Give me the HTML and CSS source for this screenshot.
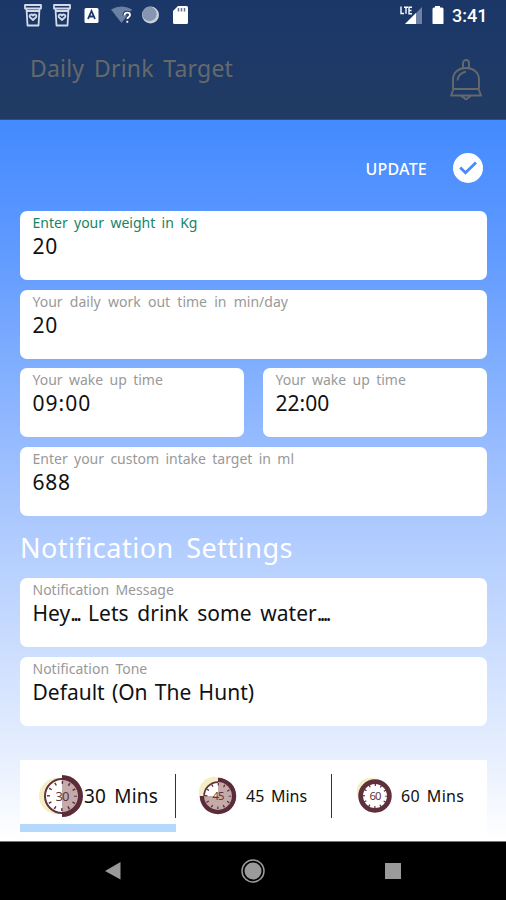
FILE: index.html
```html
<!DOCTYPE html>
<html lang="en">
<head>
    <meta charset="UTF-8">
    <meta name="viewport" content="width=device-width, initial-scale=1.0">
    <title>Daily Drink Target</title>
    <link rel="stylesheet" href="styles.css">
</head>
<body>
    <header>
        <div class="status-bar">
            <svg width="180" height="28" viewBox="0 0 180 28">
                <g fill="none" stroke="#d3dbe8" stroke-width="1.800" stroke-linejoin="round">
                    <path d="M5 5h16v3.500H5zM6.500 9l1 16.500h11l1-16.500M7 11h12"/>
                    <path d="M13 20l-3.200-3c-1-2.200 1.700-3.400 3.200-1.400 1.500-2 4.200-.8 3.200 1.400z"/>
                    <path d="M34 5h16v3.500H34zM35.500 9l1 16.500h11l1-16.500M36 11h12"/>
                    <path d="M42 20l-3.200-3c-1-2.200 1.700-3.400 3.200-1.400 1.500-2 4.200-.8 3.200 1.400z"/>
                </g>
                <rect x="64.500" y="8" width="14" height="15" rx="1.500" fill="#fff"/>
                <path d="M68 19l3.500-8 3.500 8M69.500 16.500h4" fill="none" stroke="#1d3866" stroke-width="1.800"/>
                <path d="M91 9.500q10.500-6 21 0L101.500 23z" fill="#6b80a3"/>
                <path d="M104.500 15.500c0-4 5.500-3.500 5.500-.5 0 2-2.700 2-2.700 4.500M107.300 21v2" fill="none" stroke="#1d3866" stroke-width="4"/>
                <path d="M104.500 15.500c0-4 5.500-3.500 5.500-.5 0 2-2.700 2-2.700 4M107.300 20.800v2" fill="none" stroke="#fff" stroke-width="1.800"/>
                <circle cx="130.500" cy="15" r="8.500" fill="#c9d0dc"/>
                <circle cx="129.500" cy="14" r="7.200" fill="#8796b0"/>
                <path d="M158 6h8.500q1.500 0 1.500 1.500v15q0 1.500-1.500 1.500h-12q-1.500 0-1.500-1.500V11z" fill="#fff"/>
                <path d="M158.500 8v3.500M161.500 8v3.500M164.500 8v3.500" stroke="#62738f" stroke-width="1.500"/>
            </svg>
            <div class="status-right">
                <svg width="46" height="24" viewBox="0 0 46 24">
                    <path d="M23 7v17H6z" fill="#6f82a3"/>
                    <path d="M17 13v11H6z" fill="#fff"/>
                    <path d="M2 6.500v7h3M5 7.200h4M7 7.200v6.500M13 7.200h-3v6.500h3M10 10.500h2.500" fill="none" stroke="#fff" stroke-width="1.400"/>
                    <path d="M36 6h5v1.500h2q1.500 0 1.500 1.500v14q0 1.500-1.500 1.500h-8q-1.500 0-1.500-1.500V9q0-1.500 1.500-1.500h1z" fill="#fff"/>
                </svg>
                <span class="clock">3:41</span>
            </div>
        </div>
        <div class="title-bar">
            <h1>Daily Drink Target</h1>
            <svg width="34" height="44" viewBox="0 0 34 44" fill="none" stroke="#66696c" stroke-width="1.900">
                <path d="M14 10V5a3 3 0 0 1 6 0v5"/>
                <path d="M4 31V21.500C4 14 10 10 17 10s13 4 13 11.500V31"/>
                <path d="M4.500 31h25l2.500 6.500H2z" stroke-linejoin="round"/>
                <path d="M12.500 38q1 1.500 2.500 1.500 2 3.500 4 0 1.500 0 2.500-1.500M8.500 22.500q.5-7 8.500-9"/>
            </svg>
        </div>
    </header>

    <main>
        <div class="update">
            <span>UPDATE</span>
            <svg width="30" height="30" viewBox="0 0 30 30">
                <circle cx="15" cy="15" r="15" fill="#fff"/>
                <path d="M7.200 14.500l5.300 5.300L23 9.500" fill="none" stroke="#4a8bfa" stroke-width="2.800"/>
            </svg>
        </div>

        <div class="fields">
            <div class="field active">
                <label>Enter your weight in Kg</label>
                <div class="value number">20</div>
            </div>
            <div class="field">
                <label class="workout">Your daily work out time in min/day</label>
                <div class="value number">20</div>
            </div>
            <div class="row">
                <div class="field">
                    <label>Your wake up time</label>
                    <div class="value time">09:00</div>
                </div>
                <div class="field">
                    <label>Your wake up time</label>
                    <div class="value">22:00</div>
                </div>
            </div>
            <div class="field">
                <label>Enter your custom intake target in ml</label>
                <div class="value number">688</div>
            </div>
        </div>

        <h2>Notification Settings</h2>

        <div class="fields">
            <div class="field">
                <label>Notification Message</label>
                <div class="value message">Hey<span class="dots">...</span> Lets drink some water<span class="dots">....</span></div>
            </div>
            <div class="field">
                <label>Notification Tone</label>
                <div class="value tone">Default (On The Hunt)</div>
            </div>
        </div>

        <div class="tabs">
            <div class="tab selected">
                <svg width="46" height="46" viewBox="0 0 46 46">
                    <circle cx="19" cy="23" r="18" fill="#f5edc4"/>
                    <circle cx="24" cy="23" r="17" fill="#fff" stroke="#5f3440" stroke-width="2"/>
                    <path d="M24 2a21 21 0 0 1 0 42z" fill="#5a2b38"/>
                    <path d="M24 7a16 16 0 0 1 0 32z" fill="#c4aaa9"/>
                    <circle cx="24" cy="23" r="13.500" fill="none" stroke="#5f3440" stroke-width="3" stroke-dasharray="1.500 5.569" stroke-dashoffset=".75"/>
                    <text x="24" y="28" class="dial">30</text>
                </svg>
                <span class="big">30 Mins</span>
            </div>
            <div class="tab second">
                <svg width="40" height="40" viewBox="0 0 46 46">
                    <circle cx="19" cy="19" r="18" fill="#f5edc4"/>
                    <circle cx="23" cy="23" r="16" fill="#fff" stroke="#5f3440" stroke-width="2"/>
                    <path d="M23 2a21 21 0 1 1-21 21h21z" fill="#5a2b38"/>
                    <path d="M23 7a16 16 0 1 1-16 16h16z" fill="#c4aaa9"/>
                    <circle cx="23" cy="23" r="13.500" fill="none" stroke="#5f3440" stroke-width="3" stroke-dasharray="1.500 5.569" stroke-dashoffset=".75"/>
                    <text x="23" y="28" class="dial">45</text>
                </svg>
                <span>45 Mins</span>
            </div>
            <div class="tab third">
                <svg width="40" height="40" viewBox="0 0 46 46">
                    <circle cx="18" cy="18" r="16" fill="#f5edc4"/>
                    <circle cx="23" cy="23" r="16.500" fill="#fff" stroke="#5f2f3c" stroke-width="5.500"/>
                    <circle cx="23" cy="23" r="13" fill="none" stroke="#5f3440" stroke-width="3" stroke-dasharray="1.500 5.307" stroke-dashoffset=".75"/>
                    <text x="23" y="28" class="dial">60</text>
                </svg>
                <span>60 Mins</span>
            </div>
        </div>
    </main>

    <nav>
        <svg width="18" height="20" viewBox="0 0 18 20"><path d="M1 10L16.500 1v17.500z" fill="#9a9a9a"/></svg>
        <svg width="24" height="24" viewBox="0 0 24 24">
            <circle cx="12" cy="12" r="11" fill="none" stroke="#9a9a9a" stroke-width="1.500"/>
            <circle cx="12" cy="12" r="8.500" fill="#9a9a9a"/>
        </svg>
        <svg width="16" height="16" viewBox="0 0 16 16"><path d="M0 0h16v16H0z" fill="#9a9a9a"/></svg>
    </nav>
</body>
</html>
```
FILE: styles.css
```css
* {
    box-sizing: border-box;
}
body {
    margin: 0;
    height: 900px;
    display: flex;
    flex-direction: column;
    overflow: hidden;
    font-family: "Noto Sans", "Open Sans", sans-serif;
    white-space: nowrap;
}
header {
    height: 120px;
    background: linear-gradient(#1a3768, #213b64);
    border-bottom: 1px solid #2d4f88;
}
.status-bar {
    height: 32px;
    display: flex;
    justify-content: space-between;
    padding: 0 19px 0 20px;
}
.status-right {
    display: flex;
}
.clock {
    width: 35px;
    margin-left: 7px;
    font: 500 18px/32px Roboto, sans-serif;
    color: #fff;
}
.title-bar {
    display: flex;
    justify-content: space-between;
    padding: 20px 23px 0 30px;
}
.title-bar svg {
    margin-top: 6px;
}
h1 {
    margin: 0;
    font-size: 23px;
    font-weight: 400;
    line-height: 33px;
    letter-spacing: 0.2px;
    word-spacing: 3.5px;
    color: #66696c;
}
main {
    height: 721px;
    padding: 33px 19px 0 20px;
    background: linear-gradient(#438aff 0%, #5e99ff 17%, #a9c7fe 54%, #e8f0fe 89%, #ffffff 100%);
}
.update {
    height: 30px;
    display: flex;
    justify-content: flex-end;
    align-items: center;
    gap: 26px;
    padding-right: 4px;
    margin-bottom: 28px;
    font-size: 16px;
    font-weight: 500;
    letter-spacing: 0.2px;
    color: #fff;
}
.update span {
    padding-top: 2px;
}
.fields {
    display: flex;
    flex-direction: column;
    gap: 9.7px;
}
.row {
    display: flex;
    gap: 19px;
}
.row .field {
    flex: 1;
}
.field {
    height: 69px;
    padding-left: 12.5px;
    border-radius: 7px;
    background-color: #fff;
}
label {
    display: block;
    font-size: 14px;
    line-height: 23px;
    word-spacing: 2.7px;
    color: #999;
}
.active label {
    color: #168466;
}
.workout {
    word-spacing: 3.6px;
}
.value {
    font-size: 21px;
    line-height: 25px;
    color: #111;
}
.number {
    letter-spacing: 0.7px;
}
.time {
    letter-spacing: 1px;
}
.message {
    word-spacing: 3.3px;
}
.dots {
    letter-spacing: -2.6px;
}
.tone {
    word-spacing: 1.8px;
}
h2 {
    height: 62px;
    margin: 0;
    font-size: 27px;
    font-weight: 400;
    line-height: 63px;
    letter-spacing: 0.5px;
    word-spacing: 5px;
    color: #fff;
}
.tabs {
    display: grid;
    grid-template-columns: 156px 156px 155px;
    height: 75px;
    margin-top: 34px;
    background-color: #fff;
}
.tab {
    display: flex;
    align-items: center;
    height: 72px;
    padding-top: 1px;
    font-size: 16px;
    word-spacing: 2.5px;
    color: #111;
    background: linear-gradient(#333, #333) right 14px / 1px 44px no-repeat;
}
.tab:last-child {
    background: none;
}
.selected {
    padding-left: 18px;
    border-bottom: 8px solid #b5d9fc;
    background-size: 1.5px 44px;
}
.tab.selected {
    padding-top: 9px;
}
.second {
    padding-left: 22px;
    gap: 8px;
}
.third {
    padding-left: 23px;
    gap: 6px;
}
.third span {
    letter-spacing: 0.3px;
}
.big {
    font-size: 19px;
    letter-spacing: 0.2px;
    word-spacing: 3px;
}
.dial {
    font: 13px "Noto Sans", sans-serif;
    text-anchor: middle;
    letter-spacing: -1px;
    fill: #5f3440;
}
nav {
    height: 59px;
    display: flex;
    align-items: center;
    padding-left: 104px;
    background-color: #000;
    border-top: 1px solid #777;
}
nav svg + svg {
    margin-left: 119px;
}
nav svg:last-child {
    margin-left: 120px;
}
```
